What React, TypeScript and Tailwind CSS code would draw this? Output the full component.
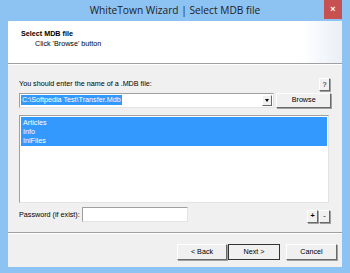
import React from "react";

const font = { fontFamily: '"Liberation Sans", Arial, sans-serif' };

// classic raised 3D button
const btn =
	"flex items-center justify-center bg-[#f0f0f0] border border-t-white border-l-white border-r-[#696969] border-b-[#696969] shadow-[1px_1px_0_#a0a0a0] text-[#000] text-[7.2px] leading-none whitespace-nowrap";

const App = () => {
	const items = ["Articles", "Info", "IniFiles"];

	return (
		<div
			className="w-[350px] h-[273px] bg-[#8dc3f2] flex flex-col px-[8px] pb-[6px] overflow-hidden"
			style={font}
		>
			{/* title bar */}
			<div className="relative h-[21px] flex items-center justify-center shrink-0">
				<span
					className="text-[10.2px] text-[#222] whitespace-nowrap"
					style={{ fontFamily: '"Open Sans", "Noto Sans", sans-serif' }}
				>
					WhiteTown Wizard | Select MDB file
				</span>
				<div className="absolute right-[0px] top-0 w-[18px] h-[19px] bg-[#c75050] flex items-center justify-center">
					<span className="text-white text-[9px] font-bold leading-none">×</span>
				</div>
			</div>

			{/* client area */}
			<div className="flex-1 bg-[#f0f0f0] flex flex-col">
				{/* header */}
				<div className="h-[42px] bg-gradient-to-r from-white from-[88%] to-[#e9eff6] pl-[13px] pt-[8px] shrink-0">
					<div className="text-[7.2px] font-bold text-black leading-[9px] whitespace-nowrap">Select MDB file</div>
					<div className="text-[7.2px] text-black leading-[9px] pl-[14px] mt-[1px] whitespace-nowrap">
						Click 'Browse' button
					</div>
				</div>
				<div className="h-[1px] bg-[#a0a0a0]" />
				<div className="h-[1px] bg-white" />

				{/* body */}
				<div className="pl-[11px] pr-[11px] flex flex-col">
					<div className="flex items-end justify-between mt-[12px] h-[14px]">
						<span className="text-[7.2px] text-black leading-none mb-[4px] whitespace-nowrap">
							You should enter the name of a .MDB file:
						</span>
						<div className={`${btn} w-[11px] h-[13px] mr-[1px]`}>?</div>
					</div>

					<div className="flex items-center mt-[1px] h-[16px]">
						<div className="w-[257px] h-[15px] bg-white border border-t-[#a0a0a0] border-l-[#a0a0a0] border-r-[#e3e3e3] border-b-[#e3e3e3] flex items-center pl-[1px] pr-[1px]">
							<span className="bg-[#3399ff] text-white text-[7.2px] leading-[10px] px-[1px] whitespace-nowrap">
								C:\Softpedia Test\Transfer.Mdb
							</span>
							<div className="ml-auto w-[10px] h-[11px] bg-[#f0f0f0] border border-t-white border-l-white border-r-[#696969] border-b-[#696969] flex items-center justify-center">
								<div className="w-0 h-0 border-l-[2.5px] border-r-[2.5px] border-t-[3px] border-l-transparent border-r-transparent border-t-black" />
							</div>
						</div>
						<div className={`${btn} w-[55px] h-[15px] ml-[2px]`}>Browse</div>
					</div>

					<div className="mt-[7px] w-[310px] h-[88px] bg-white border border-t-[#a0a0a0] border-l-[#a0a0a0] border-r-[#e3e3e3] border-b-[#e3e3e3] p-[1px]">
						<div className="bg-[#3399ff] pt-[1px] pb-[1px]">
							{items.map((it) => (
								<div key={it} className="text-white text-[7.2px] leading-[9px] pl-[2px]">
									{it}
								</div>
							))}
						</div>
					</div>

					<div className="flex items-center mt-[4px] h-[15px]">
						<span className="text-[7.2px] text-black leading-none w-[63px] whitespace-nowrap">
							Password (if exist):
						</span>
						<div className="w-[106px] h-[15px] bg-white border border-t-[#a0a0a0] border-l-[#a0a0a0] border-r-[#e3e3e3] border-b-[#e3e3e3]" />
						<div className="ml-auto flex mr-[1px] mt-[3px]">
							<div className={`${btn} w-[11px] h-[13px] font-bold`}>+</div>
							<div className={`${btn} w-[11px] h-[13px] ml-[1px]`}>-</div>
						</div>
					</div>
				</div>

				{/* footer */}
				<div className="mt-[10px] h-[1px] bg-[#a0a0a0]" />
				<div className="h-[1px] bg-white" />
				<div className="flex items-center pl-[169px] mt-[10px]">
					<div className={`${btn} w-[50px] h-[16px]`}>&lt; Back</div>
					<div className="w-[52px] h-[16px] border border-[#333] flex items-center justify-center bg-[#f0f0f0] text-[7.2px] leading-none ml-[1px]">
						Next &gt;
					</div>
					<div className={`${btn} w-[51px] h-[16px] ml-[6px]`}>Cancel</div>
				</div>
			</div>
		</div>
	);
};

export default App;
